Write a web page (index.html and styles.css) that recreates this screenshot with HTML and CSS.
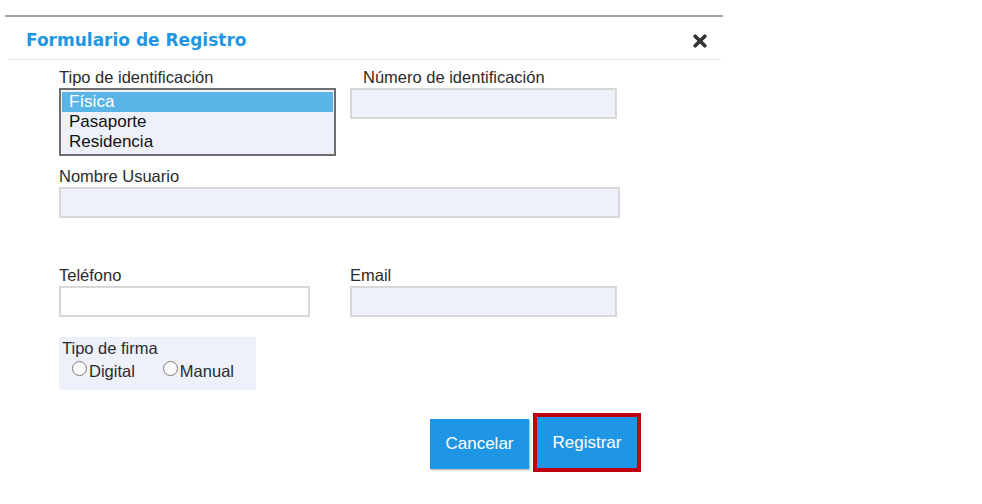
FILE: index.html
```html
<!DOCTYPE html>
<html lang="es">
<head>
<meta charset="utf-8">
<title>Formulario de Registro</title>
<link rel="stylesheet" href="styles.css">
</head>
<body>
<div class="modal">
  <div class="modal-header">
    <h1 class="title">Formulario de Registro</h1>
    <span class="close" aria-label="Cerrar">
      <svg width="14" height="14" viewBox="0 0 14 14"><path d="M2.2 2.2 L11.8 11.8 M11.8 2.2 L2.2 11.8" stroke="#333" stroke-width="3.6" stroke-linecap="round"/></svg>
    </span>
  </div>
  <div class="modal-body">
    <div class="row row-id">
      <div class="field">
        <div class="label">Tipo de identificación</div>
        <div class="listbox">
          <div class="option selected">Física</div>
          <div class="option">Pasaporte</div>
          <div class="option">Residencia</div>
        </div>
      </div>
      <div class="field">
        <div class="label label-indent">Número de identificación</div>
        <div class="input input-gray"></div>
      </div>
    </div>
    <div class="row row-name">
      <div class="field">
        <div class="label">Nombre Usuario</div>
        <div class="input input-gray input-wide"></div>
      </div>
    </div>
    <div class="row row-contact">
      <div class="field">
        <div class="label">Teléfono</div>
        <div class="input input-white input-phone"></div>
      </div>
      <div class="field">
        <div class="label">Email</div>
        <div class="input input-gray"></div>
      </div>
    </div>
    <div class="firma">
      <div class="label">Tipo de firma</div>
      <div class="radios">
        <span class="radio"><span class="circle"></span>Digital</span>
        <span class="radio"><span class="circle"></span>Manual</span>
      </div>
    </div>
    <div class="actions">
      <button class="btn">Cancelar</button>
      <button class="btn btn-primary">Registrar</button>
    </div>
  </div>
</div>
</body>
</html>
```

FILE: styles.css
```css
html, body {
  margin: 0;
  padding: 0;
  background: #ffffff;
}

body {
  font-family: "Liberation Sans", Arial, sans-serif;
  color: #333333;
}

.modal {
  margin: 15px 0 0 5px;
  width: 718px;
  border-top: 2px solid #a3a3a3;
}

.modal-header {
  box-sizing: border-box;
  height: 43px;
  margin: 0 2px 0 3px;
  padding: 13px 14px 0 18px;
  border-bottom: 1px solid #e6e6e6;
  display: flex;
  justify-content: space-between;
  align-items: flex-start;
}

.title {
  margin: 0;
  font-family: "DejaVu Sans", Verdana, sans-serif;
  font-weight: bold;
  font-size: 17px;
  line-height: 20px;
  color: #2196e3;
}

.close {
  display: flex;
  margin-top: 4px;
}

.modal-body {
  padding: 8px 0 0 54px;
}

.label {
  font-size: 16.5px;
  line-height: 19px;
  color: #2b2b2b;
  margin-bottom: 1px;
  white-space: nowrap;
}

.label-indent {
  padding-left: 13px;
}

.row {
  display: flex;
  gap: 14px;
}

.row-id .field:first-child {
  width: 277px;
}

.row-name {
  margin-top: 11px;
}

.row-contact {
  margin-top: 48px;
  gap: 40px;
}

.listbox {
  box-sizing: border-box;
  width: 277px;
  height: 68px;
  border: 2px solid #6e6e6e;
  background: #eef1f9;
  padding: 2px 1px;
}

.option {
  height: 20px;
  line-height: 20px;
  font-size: 17px;
  color: #111111;
  padding-left: 7px;
}

.option.selected {
  background: #5ab4e5;
  color: #ffffff;
}

.input {
  box-sizing: border-box;
  width: 267px;
  height: 31px;
  border: 2px solid #d8d8d8;
}

.input-gray {
  background: #eef1f9;
}

.input-white {
  background: #ffffff;
}

.input-wide {
  width: 561px;
}

.input-phone {
  width: 251px;
}

.firma {
  box-sizing: border-box;
  margin-top: 20px;
  width: 197px;
  height: 53px;
  background: #eef1f9;
  padding: 2px 0 0 3px;
}

.radios {
  display: flex;
  gap: 28px;
  padding-left: 10px;
  margin-top: 3px;
}

.radio {
  display: flex;
  align-items: center;
  font-size: 16.5px;
  line-height: 20px;
  color: #2b2b2b;
}

.circle {
  box-sizing: border-box;
  width: 15px;
  height: 15px;
  border: 1px solid #7a7a7a;
  border-radius: 50%;
  background: #fbfbfb;
  margin-right: 2px;
  margin-top: -5px;
}

.actions {
  display: flex;
  align-items: center;
  gap: 4px;
  margin-top: 23px;
  padding-left: 371px;
}

.btn {
  box-sizing: border-box;
  width: 99px;
  height: 50px;
  border: none;
  background: #1f96e5;
  color: #ffffff;
  font-family: "Liberation Sans", Arial, sans-serif;
  font-size: 17px;
  box-shadow: 1px 1px 2px rgba(0, 0, 0, 0.35);
  padding: 0;
  margin-top: 2px;
}

.btn-primary {
  width: 108px;
  height: 59px;
  border: 4px solid #c00010;
  box-shadow: none;
  margin-top: 0;
}
```
